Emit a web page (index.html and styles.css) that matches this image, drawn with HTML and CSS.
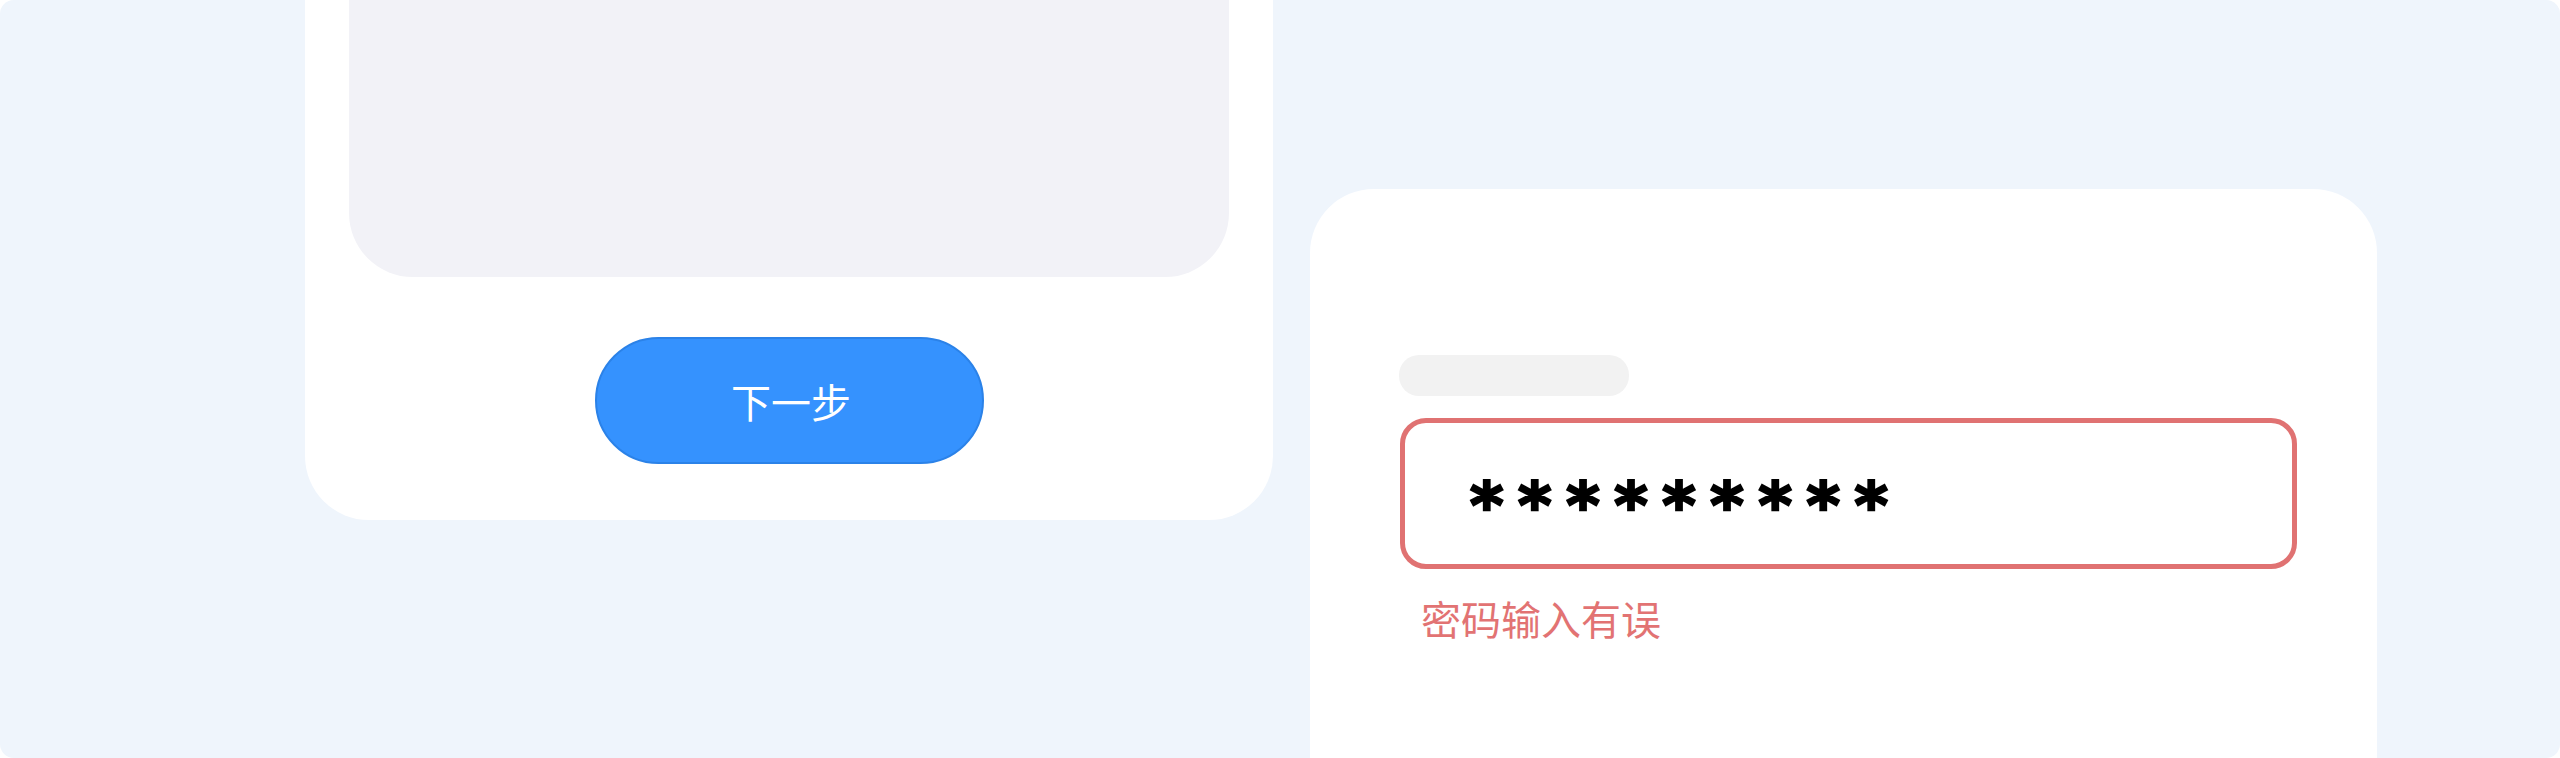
FILE: index.html
```html
<!DOCTYPE html>
<html lang="zh-CN">
<head>
<meta charset="utf-8">
<title>密码输入</title>
<link rel="stylesheet" href="styles.css">
</head>
<body>
<div class="stage">
  <section class="phone-card">
    <div class="preview-panel"></div>
    <button class="next-btn" type="button">下一步</button>
  </section>
  <section class="form-card">
    <div class="label-placeholder"></div>
    <div class="password-field"><span class="mask">*********</span></div>
    <p class="error-text">密码输入有误</p>
  </section>
</div>
</body>
</html>
```
FILE: styles.css
```css
html, body {
  margin: 0;
  padding: 0;
  background: #ffffff;
}
body {
  width: 2560px;
  height: 758px;
  overflow: hidden;
  font-family: "Noto Sans CJK SC", "Noto Sans", sans-serif;
}
.stage {
  box-sizing: border-box;
  width: 2560px;
  height: 758px;
  background: #eff5fc;
  border-radius: 14px;
  overflow: hidden;
  display: flex;
  align-items: flex-start;
}
.phone-card {
  box-sizing: border-box;
  margin-left: 305px;
  margin-top: -100px;
  width: 968px;
  height: 620px;
  background: #ffffff;
  border-radius: 64px;
  padding: 0 44px;
  display: flex;
  flex-direction: column;
  align-items: center;
  flex-shrink: 0;
}
.preview-panel {
  width: 100%;
  height: 377px;
  background: #f2f2f7;
  border-radius: 0 0 64px 64px;
}
.next-btn {
  box-sizing: border-box;
  margin-top: 60px;
  width: 389px;
  height: 127px;
  border-radius: 64px;
  background: #3592fe;
  border: 2px solid #2b82e8;
  color: #ffffff;
  font-family: "Noto Sans CJK SC", sans-serif;
  font-weight: 400;
  font-size: 40px;
  line-height: 1;
  padding: 0 0 0 4px;
}
.form-card {
  box-sizing: border-box;
  margin-left: 37px;
  margin-top: 189px;
  width: 1067px;
  height: 700px;
  background: #ffffff;
  border-radius: 64px 64px 0 0;
  padding: 166px 80px 0 90px;
  flex-shrink: 0;
}
.label-placeholder {
  width: 230px;
  height: 41px;
  border-radius: 20px;
  background: #f2f2f2;
  margin-left: -1px;
}
.password-field {
  box-sizing: border-box;
  margin-top: 22px;
  width: 897px;
  height: 151px;
  border: 5px solid #e07272;
  border-radius: 26px;
  padding: 26px 0 0 65px;
  overflow: hidden;
}
.mask {
  display: block;
  font-family: "DejaVu Sans", sans-serif;
  font-weight: bold;
  font-size: 64px;
  line-height: 115px;
  letter-spacing: 14.6px;
  color: #000000;
  -webkit-text-stroke: 2.5px #000000;
}
.error-text {
  margin: 26px 0 0 21px;
  font-size: 40px;
  font-weight: 400;
  line-height: 46px;
  color: #e27373;
}
```
